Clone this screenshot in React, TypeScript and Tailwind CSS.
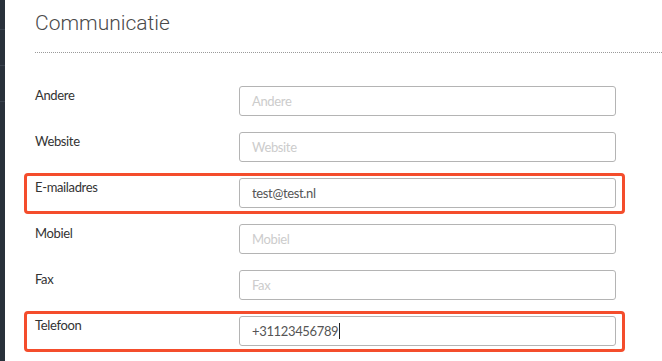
import React from "react";

type Row = { label: string; value?: string; highlight?: boolean; caret?: boolean };

const rows: Row[] = [
  { label: "Andere" },
  { label: "Website" },
  { label: "E-mailadres", value: "test@test.nl", highlight: true },
  { label: "Mobiel" },
  { label: "Fax" },
  { label: "Telefoon", value: "+31123456789", highlight: true, caret: true },
];

export default function App() {
  return (
    <div className="flex h-[361px] w-[662px] overflow-hidden bg-white">
      <div className="flex w-[5px] shrink-0 flex-col gap-[35px] bg-[#29313b] pt-[29px]">
        <div className="h-px bg-[#3a434e]" />
        <div className="h-px bg-[#3a434e]" />
        <div className="h-px bg-[#3a434e]" />
      </div>
      <div className="min-w-0 flex-1 pl-[19px]">
        <div className="ml-[11px] border-b border-dotted border-[#9a9a9a] pb-[15px] pt-[9px]">
          <h1
            className="text-[21px] leading-[28px] font-light text-[#4a4a4a]"
            style={{ fontFamily: "Roboto, 'Liberation Sans', sans-serif" }}
          >
            Communicatie
          </h1>
        </div>
        <div
          className="mt-[28px] flex flex-col gap-[5px] text-[13px] leading-[20px] tracking-[-0.35px]"
          style={{ fontFamily: "Lato, 'Liberation Sans', sans-serif" }}
        >
          {rows.map((r) => (
            <div
              key={r.label}
              className={
                "flex w-[601px] rounded-[4px] border-[3px] pb-[3px] pl-[8px] pr-[6px] pt-[2px] " +
                (r.highlight ? "border-[#f44d2c]" : "border-transparent")
              }
            >
              <div className="-mt-px w-[204px] shrink-0 text-[#333333]">{r.label}</div>
              <div className="flex h-[30px] w-[377px] items-center rounded-[3px] border border-[#b4b4b4] px-[12px]">
                {r.value ? (
                  <span className="flex items-center text-[#555555]">
                    {r.value}
                    {r.caret && <span className="ml-px inline-block h-[16px] w-px bg-[#222222]" />}
                  </span>
                ) : (
                  <span className="text-[#cccccc]">{r.label}</span>
                )}
              </div>
            </div>
          ))}
        </div>
      </div>
    </div>
  );
}
